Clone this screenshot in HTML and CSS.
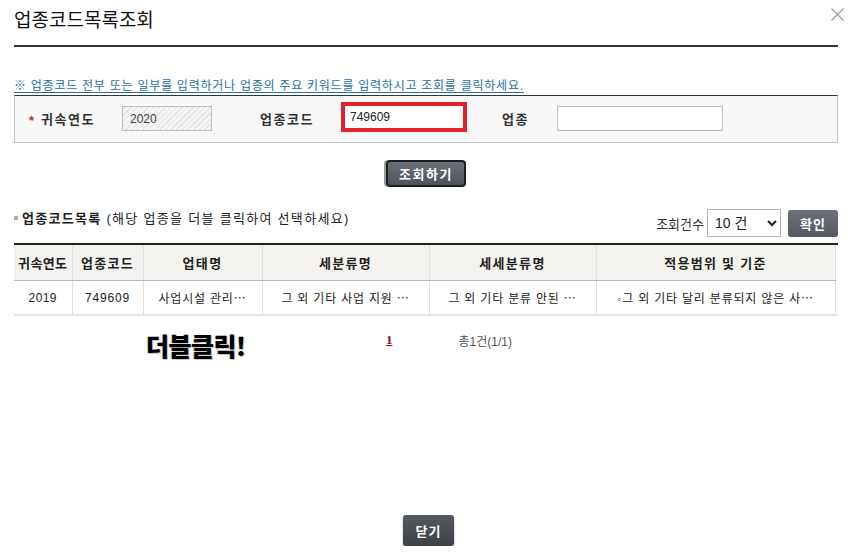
FILE: index.html
```html
<!DOCTYPE html>
<html lang="ko">

<head>
    <meta charset="UTF-8">
    <meta name="viewport" content="width=device-width, initial-scale=1.0">
    <title>업종코드목록조회</title>
    <link rel="stylesheet" href="styles.css">
</head>

<body>
    <div class="popup">
        <div class="popup-head">
            <h1 class="popup-title">업종코드목록조회</h1>
            <button class="close-btn" aria-label="닫기">
                <svg width="13" height="13" viewBox="0 0 13 13">
                    <path d="M0.5 0.5 L12.5 12.5 M12.5 0.5 L0.5 12.5" stroke="#9a9a9a" stroke-width="1.1" fill="none" />
                </svg>
            </button>
        </div>

        <p class="guide">※ 업종코드 전부 또는 일부를 입력하거나 업종의 주요 키워드를 입력하시고 조회를 클릭하세요.</p>

        <!-- search box -->
        <div class="search-box">
            <span class="req">*</span>
            <span class="label label-first">귀속연도</span>
            <input class="inp inp-year" type="text" value="2020" readonly>
            <span class="label label-code">업종코드</span>
            <input class="inp inp-code" type="text" value="749609">
            <span class="label label-biz">업종</span>
            <input class="inp inp-biz" type="text" value="">
        </div>

        <div class="btn-row">
            <button class="btn btn-search">조회하기</button>
        </div>

        <!-- list header -->
        <div class="list-head">
            <p class="list-title"><span class="bullet"></span><b>업종코드목록</b> (해당 업종을 더블 클릭하여 선택하세요)</p>
            <div class="list-tools">
                <span class="count-label">조회건수</span>
                <select class="count-select">
                    <option>10 건</option>
                    <option>20 건</option>
                    <option>50 건</option>
                </select>
                <button class="btn btn-ok">확인</button>
            </div>
        </div>

        <div class="table-wrap">
            <table class="list">
                <colgroup>
                    <col style="width:58px">
                    <col style="width:71px">
                    <col style="width:119px">
                    <col style="width:167px">
                    <col style="width:167px">
                    <col style="width:239px">
                </colgroup>
                <thead>
                    <tr>
                        <th>귀속연도</th>
                        <th>업종코드</th>
                        <th>업태명</th>
                        <th>세분류명</th>
                        <th>세세분류명</th>
                        <th>적용범위 및 기준</th>
                    </tr>
                </thead>
                <tbody>
                    <tr>
                        <td>2019</td>
                        <td>749609</td>
                        <td>사업시설 관리⋯</td>
                        <td>그 외 기타 사업 지원 ⋯</td>
                        <td>그 외 기타 분류 안된 ⋯</td>
                        <td>◦그 외 기타 달리 분류되지 않은 사⋯</td>
                    </tr>
                </tbody>
            </table>
        </div>

        <div class="pager-row">
            <span class="note">더블클릭!</span>
            <a class="page-num" href="#">1</a>
            <span class="total">총1건(1/1)</span>
        </div>

        <div class="foot">
            <button class="btn btn-close">닫기</button>
        </div>
    </div>
</body>

</html>
```

FILE: styles.css
```css
body {
    margin: 0;
    font-family: "Liberation Sans", "Noto Sans CJK KR", sans-serif;
    color: #222;
    background: #fff;
}

.popup {
    position: relative;
    width: 824px;
    margin: 0 18px 0 14px;
}

.popup-head {
    height: 45px;
    border-bottom: 2px solid #333;
}

.popup-title {
    margin: 0;
    padding-top: 7px;
    font-size: 19px;
    line-height: 28px;
    font-weight: normal;
    color: #111;
}

.close-btn {
    position: absolute;
    top: 8px;
    right: -6px;
    padding: 0;
    border: 0;
    background: none;
    line-height: 0;
}

.guide {
    margin: 31px 0 0;
    font-size: 12px;
    line-height: 17px;
    color: #1a6fa8;
    text-decoration: underline;
    text-underline-offset: 2px;
    letter-spacing: 0.75px;
}

/* search box */
.search-box {
    display: flex;
    align-items: center;
    height: 25px;
    padding: 10px 0 11px 14px;
    background: #f8f8f8;
    border: 1px solid #c4c4c4;
    border-top-color: #333;
}

.req {
    width: 12px;
    color: #c8202a;
    font-size: 13px;
    font-weight: bold;
    line-height: 13px;
    padding-top: 3px;
}

.label {
    font-size: 13px;
    font-weight: bold;
    letter-spacing: 1.5px;
    color: #333;
}

.label-first {
    width: 81px;
}

.label-code {
    width: 81px;
    margin-left: 48px;
}

.label-biz {
    width: 55px;
    margin-left: 35px;
}

.inp {
    box-sizing: border-box;
    height: 25px;
    padding: 0 7px;
    border: 1px solid #bdbdbd;
    background: #fff;
    font-family: "Liberation Sans", sans-serif;
    font-size: 12px;
    color: #222;
    outline: none;
}

.inp-year {
    width: 90px;
    background: repeating-linear-gradient(-45deg, #e2e2e2 0 1px, #f4f4f4 1px 4px);
    color: #444;
}

.inp-code {
    width: 126px;
    height: 30px;
    margin-top: -3px;
    padding: 0 5px;
    border: 4px solid #e2222a;
}

.inp-biz {
    width: 166px;
}

/* buttons */
.btn {
    box-sizing: border-box;
    font-family: "Noto Sans CJK KR", sans-serif;
    font-weight: bold;
    color: #fff;
    cursor: pointer;
}

.btn-row {
    display: flex;
    justify-content: center;
    margin-top: 17px;
}

.btn-search {
    width: 80px;
    height: 27px;
    border: 2px solid #1c1c1c;
    border-radius: 4px;
    background: linear-gradient(#6a6f78, #4f545c);
    box-shadow: -2px 0 0 #9a9a9a;
    font-size: 13px;
    letter-spacing: 1.5px;
    padding: 0;
}

/* list header */
.list-head {
    display: flex;
    justify-content: space-between;
    align-items: center;
    margin-top: 22px;
    height: 28px;
}

.list-title {
    margin: 0;
    align-self: flex-start;
    padding-top: 1px;
    font-size: 13px;
    line-height: 18px;
    letter-spacing: 1.3px;
    color: #222;
}

.list-title b {
    letter-spacing: 1.3px;
}

.bullet {
    display: inline-block;
    width: 4px;
    height: 4px;
    margin: 0 4px 3px 0;
    background: #b0b0b0;
}

.list-tools {
    display: flex;
    align-items: center;
}

.count-label {
    font-size: 13px;
    color: #333;
    margin-right: 3px;
}

.count-select {
    width: 74px;
    height: 28px;
    border: 1px solid #b5b5b5;
    background: #fff;
    font-family: "Liberation Sans", "Noto Sans CJK KR", sans-serif;
    font-size: 14px;
    color: #222;
    padding-left: 3px;
}

.btn-ok {
    width: 50px;
    height: 27px;
    margin-left: 7px;
    border: 0;
    border-radius: 3px;
    background: linear-gradient(#6b7079, #555a62);
    font-size: 13px;
    letter-spacing: 1px;
}

/* table */
.table-wrap {
    margin-top: 6px;
    border-top: 2px solid #222;
    border-bottom: 2px solid #e4e4e4;
}

.list {
    width: 821px;
    border-collapse: collapse;
    table-layout: fixed;
}

.list th {
    height: 35px;
    padding: 0;
    background: #f4f2ef;
    border-bottom: 1px solid #b9b9b9;
    border-left: 1px solid #e0e0e0;
    font-size: 13px;
    letter-spacing: 1.3px;
    color: #222;
}

.list td {
    height: 33px;
    padding: 0 4px;
    border-left: 1px solid #e0e0e0;
    text-align: center;
    font-size: 12px;
    color: #222;
    white-space: nowrap;
    overflow: hidden;
    letter-spacing: 0.8px;
}

.list th:first-child,
.list td:first-child {
    border-left: 0;
    letter-spacing: 0.4px;
}

.list th:last-child,
.list td:last-child {
    border-right: 1px solid #e0e0e0;
}

/* pager */
.pager-row {
    position: relative;
    display: flex;
    align-items: center;
    height: 48px;
}

.note {
    position: absolute;
    left: 132px;
    top: 12px;
    font-family: "Noto Sans CJK KR", sans-serif;
    font-size: 25px;
    font-weight: 900;
    line-height: 34px;
    color: #000;
    letter-spacing: -0.5px;
    text-shadow: 1px 1px 0 #c8c8c8, -1px 0 0 #d8d8d8;
}

.page-num {
    margin-left: 372px;
    font-family: "Liberation Serif", serif;
    font-size: 13px;
    font-weight: bold;
    color: #8b1020;
}

.total {
    margin-left: 66px;
    font-size: 12px;
    color: #555;
}

.foot {
    display: flex;
    justify-content: center;
    margin-top: 151px;
    padding-left: 5px;
}

.btn-close {
    width: 51px;
    height: 31px;
    border: 0;
    border-radius: 3px;
    background: linear-gradient(#55595f, #3e4146);
    box-shadow: 0 1px 2px rgba(0, 0, 0, 0.4);
    font-size: 13px;
    letter-spacing: 1px;
}
```
